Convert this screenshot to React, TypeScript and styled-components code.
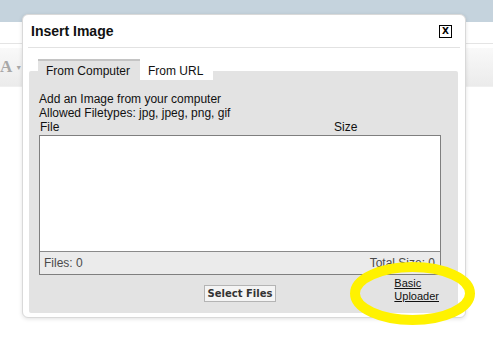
import React from "react";
import styled, { createGlobalStyle } from "styled-components";

const GlobalStyle = createGlobalStyle`
  html, body {
    margin: 0;
    padding: 0;
    background: #ffffff;
    font-family: "Liberation Sans", Arial, sans-serif;
  }
`;

const Page = styled.div`
  position: relative;
  width: 493px;
  height: 346px;
  overflow: hidden;
  background: #ffffff;
`;

const HeaderBand = styled.div`
  height: 22px;
  background: #c5d3dd;
`;

const PageRule = styled.div`
  margin-top: 21px;
  height: 1px;
  background: #e4e4e4;
`;

const Toolbar = styled.div`
  margin-top: 4px;
  height: 38px;
  display: flex;
  align-items: center;
  gap: 3px;
  padding-left: 0;
  background: linear-gradient(#f9f9f9, #ebebeb);
  border-bottom: 1px solid #f0f0f0;
`;

const ToolGlyph = styled.span`
  font-family: "Liberation Serif", serif;
  font-size: 17px;
  font-weight: bold;
  color: #a8a8a8;
`;

const Caret = styled.span`
  font-size: 7px;
  color: #a8a8a8;
`;

const Modal = styled.div`
  position: absolute;
  left: 22px;
  top: 14px;
  width: 444px;
  height: 304px;
  box-sizing: border-box;
  background: #ffffff;
  border: 1px solid #d9d9d9;
  border-radius: 6px;
  box-shadow: 0 1px 4px rgba(0, 0, 0, 0.12);
  display: flex;
  flex-direction: column;
`;

const TitleBar = styled.div`
  height: 32px;
  margin: 0 5px;
  padding: 0 8px 0 3px;
  display: flex;
  align-items: center;
  justify-content: space-between;
  border-bottom: 1px solid #e2e2e2;
`;

const Title = styled.h1`
  margin: 0;
  font-size: 14px;
  font-weight: bold;
  color: #111111;
`;

const CloseBox = styled.button`
  width: 13px;
  height: 13px;
  padding: 0;
  box-sizing: border-box;
  border: 1px solid #000000;
  background: #ffffff;
  font-family: "DejaVu Sans", Verdana, sans-serif;
  font-size: 9px;
  font-weight: bold;
  line-height: 11px;
  color: #000000;
  display: flex;
  align-items: center;
  justify-content: center;
`;

const Body = styled.div`
  padding: 11px 7px 0 6px;
  display: flex;
  flex-direction: column;
`;

const TabRow = styled.div`
  position: relative;
  z-index: 1;
  display: flex;
  align-items: flex-start;
  padding-left: 9px;
  margin-bottom: -9px;
`;

const Tab = styled.div<{ $active?: boolean }>`
  height: 21px;
  box-sizing: border-box;
  padding: 0 10px 0 8px;
  display: flex;
  align-items: center;
  font-size: 12px;
  color: #111111;
  background: ${(p) => (p.$active ? "#e3e3e3" : "#ffffff")};
  border-top: 2px solid ${(p) => (p.$active ? "#c4c4c4" : "#ffffff")};
`;

const Panel = styled.div`
  background: #e3e3e3;
  border-radius: 2px;
  padding: 21px 17px 10px 10px;
  font-size: 12px;
  line-height: 14px;
  color: #111111;
`;

const Line = styled.div``;

const ColumnHeads = styled.div`
  display: grid;
  grid-template-columns: 1fr 107px;
  padding-left: 1px;
  margin-bottom: 1px;
`;

const FileList = styled.div`
  height: 140px;
  box-sizing: border-box;
  border: 1px solid #7f7f7f;
  background: #ffffff;
  display: flex;
  flex-direction: column;
`;

const ListBody = styled.div`
  flex: 1;
`;

const ListFooter = styled.div`
  height: 22px;
  border-top: 1px solid #8a8a8a;
  background: #ebebeb;
  display: flex;
  align-items: center;
  justify-content: space-between;
  padding: 0 5px 0 4px;
  color: #4a4a4a;
  font-size: 12px;
`;

const BottomRow = styled.div`
  display: grid;
  grid-template-columns: 1fr auto 1fr;
  align-items: start;
  padding-top: 2px;
`;

const SelectButton = styled.button`
  grid-column: 2;
  margin-top: 8px;
  height: 17px;
  padding: 0 3px;
  box-sizing: border-box;
  border: 1px solid #b4b4b4;
  background: #f4f4f4;
  font-family: "DejaVu Sans", Verdana, sans-serif;
  font-size: 10px;
  font-weight: bold;
  color: #333333;
  line-height: 15px;
`;

const UploaderLink = styled.a`
  grid-column: 3;
  justify-self: end;
  margin-right: 2px;
  font-size: 11px;
  line-height: 13px;
  color: #111111;
  text-decoration: underline;
`;

const Highlight = styled.svg`
  position: absolute;
  left: 350px;
  top: 262px;
  pointer-events: none;
`;

export default function App() {
  return (
    <Page>
      <GlobalStyle />
      <HeaderBand />
      <PageRule />
      <Toolbar>
        <ToolGlyph>A</ToolGlyph>
        <Caret>▼</Caret>
      </Toolbar>

      <Modal>
        <TitleBar>
          <Title>Insert Image</Title>
          <CloseBox>X</CloseBox>
        </TitleBar>
        <Body>
          <TabRow>
            <Tab $active>From Computer</Tab>
            <Tab>From URL</Tab>
          </TabRow>
          <Panel>
            <Line>Add an Image from your computer</Line>
            <Line>Allowed Filetypes: jpg, jpeg, png, gif</Line>
            <ColumnHeads>
              <span>File</span>
              <span>Size</span>
            </ColumnHeads>
            <FileList>
              <ListBody />
              <ListFooter>
                <span>Files: 0</span>
                <span>Total Size: 0</span>
              </ListFooter>
            </FileList>
            <BottomRow>
              <SelectButton>Select Files</SelectButton>
              <UploaderLink href="#">
                Basic
                <br />
                Uploader
              </UploaderLink>
            </BottomRow>
          </Panel>
        </Body>
      </Modal>

      <Highlight width="125" height="63" viewBox="0 0 125 63">
        <ellipse
          cx="62.5"
          cy="31.5"
          rx="57.5"
          ry="26.5"
          fill="none"
          stroke="#fff200"
          strokeWidth="10"
        />
      </Highlight>
    </Page>
  );
}
